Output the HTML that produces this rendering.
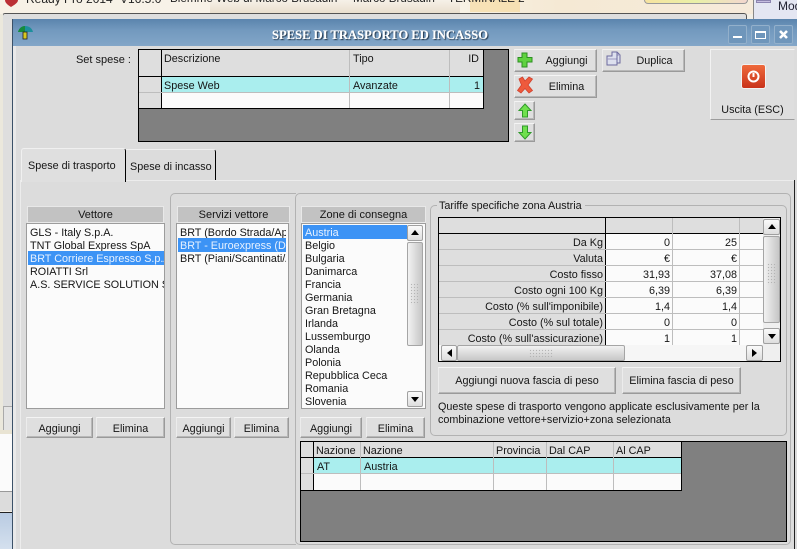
<!DOCTYPE html>
<html><head><meta charset="utf-8">
<style>
html,body{margin:0;padding:0}
body{width:797px;height:549px;overflow:hidden;position:relative;background:#f3efe6;font:10.8px/13px "Liberation Sans",sans-serif;color:#151515}
div,span,svg{position:absolute;box-sizing:border-box}
.t{white-space:nowrap;line-height:14px;height:14px;margin-top:1px}
.r{text-align:right}
.c{text-align:center}
.btn{background:#dfdfdf;border:1px solid;border-color:#f4f4f4 #9a9a9a #9a9a9a #ececec;box-shadow:inset -1px -1px 0 #b8b8b8;display:flex;align-items:center;justify-content:center;white-space:nowrap;padding-top:2px}
.lo{padding-top:3px}
.b{background:#000}
.g{background:#bdbdbd}
.hd{background:#c2c2c2;border:1px solid #e8e8e8;text-align:center;line-height:17px;font-size:11px}
.list{background:#fbfbfb;border:1px solid #9c9c9c;overflow:hidden}
.list div{left:2px;right:0;height:13px;line-height:13px;white-space:nowrap;padding-left:1px;overflow:hidden}
.list div.sel{background:#3c93f5;color:#e8f2ff;height:14px;line-height:17px}
.sb{background:linear-gradient(90deg,#f2f2f2,#dcdcdc 50%,#c6c6c6);border:1px solid #a5a5a5;border-radius:2px}
.ar{background:linear-gradient(#fafafa,#dedede);border:1px solid #a0a0a0;border-radius:2px}
.win{background:#6f96bb;border:1px solid #93b0cb;border-radius:2px}
.group{border:1px solid #b2b2b2;border-radius:5px}
.grip{background-image:radial-gradient(circle,#b4b4b4 .7px,transparent .8px);background-size:3px 3px}
</style></head><body>

<!-- background behind -->
<div style="left:0;top:0;width:797px;height:14px;background:linear-gradient(90deg,#f7f1e6,#f8f4ea 55%,#f5e9d4 70%,#f6ebdc)"></div>
<div style="left:210px;top:0;width:250px;height:13px;background:linear-gradient(#f6f1e8,#eadfce)"></div>
<div style="left:470px;top:0;width:50px;height:12px;background:#f6d89a;opacity:.6"></div>
<div style="left:644px;top:0;width:104px;height:4px;border:1px solid #999;border-top:0;border-radius:0 0 5px 5px;background:linear-gradient(90deg,#f7e3a0,#e9f0a8,#f3d7cf)"></div>
<svg style="left:3px;top:0" width="16" height="7"><path d="M2 0 H15 C15 3 11 5 8 7 C5 5 2 3 2 0Z" fill="#bb2f35"/></svg>
<div class="t" style="left:26px;top:-9px;font-size:12px;color:#222">Ready Pro 2014</div>
<div class="t" style="left:120px;top:-9px;font-size:12px;color:#222">V16.5.0</div>
<div class="t" style="left:170px;top:-9px;font-size:11.7px;color:#222">Biemme Web di Marco Brusadin</div>
<div class="t" style="left:353px;top:-9px;font-size:11.7px;color:#222">Marco Brusadin</div>
<div class="t" style="left:448px;top:-9px;font-size:11.7px;color:#222">TERMINALE 2</div>
<div style="left:2px;top:13px;width:745px;height:420px;background:#dedede;border:1px solid #555;border-bottom:0;border-radius:3px 3px 0 0"></div>
<div style="left:753px;top:0;width:44px;height:19px;background:#e4e6f2;border-left:1px solid #888"></div>
<div style="left:756px;top:0;width:15px;height:3px;background:#c6bde0;border:1px solid #8c84b0"></div>
<div class="t" style="left:778px;top:-1px;font-size:12px;line-height:12px;color:#223">Mod</div>
<div style="left:0;top:14px;width:3px;height:420px;background:#ebe8dc"></div>
<div style="left:3px;top:406px;width:10px;height:25px;background:#e4e4e4;border:1px solid #aaa"></div>
<div style="left:0;top:430px;width:13px;height:4px;background:#e9e4d3"></div>
<div style="left:0;top:434px;width:13px;height:58px;background:#fbfbfb"></div>
<div style="left:0;top:491px;width:13px;height:20px;background:#dcdcdc;border-top:1px solid #999;"></div>
<div style="left:0;top:512px;width:13px;height:1px;background:#222"></div>
<div style="left:0;top:513px;width:13px;height:36px;background:linear-gradient(#b9cbe2,#d4e0ee)"></div>

<!-- window -->
<div style="left:12px;top:19px;width:785px;height:530px;background:#dcdcdc;border-left:1px solid #3b5168"></div>
<div style="left:13px;top:19px;width:784px;height:27px;background:linear-gradient(#5b84ad,#7299be 40%,#83a6c8)"></div>
<div style="left:13px;top:46px;width:3px;height:503px;background:#e9e9e9"></div>
<svg style="left:17px;top:25px" width="17" height="15" viewBox="0 0 17 15"><path d="M1 7 C2 3 5 1 8 1 C12 1 15 3 16 7 Z" fill="#1d8f9c"/><path d="M1 7 C2 3 5 1 8 1 L8 7Z" fill="#168b3c"/><rect x="6" y="7" width="4" height="7" fill="#d8c820" stroke="#222" stroke-width=".8"/></svg>
<div class="t c" style="left:240px;top:27px;width:280px;font:bold 12.6px/14px 'Liberation Serif',serif;color:#fff;text-shadow:1px 1px 1px #1f3348,0 0 .6px #fff">SPESE DI TRASPORTO ED INCASSO</div>
<div class="win" style="left:728px;top:25px;width:19px;height:19px"></div>
<div style="left:733px;top:36px;width:9px;height:2px;background:#fff"></div>
<div class="win" style="left:751px;top:25px;width:19px;height:19px"></div>
<div style="left:755px;top:31px;width:11px;height:8px;border:1px solid #fff;border-top:2px solid #fff"></div>
<div class="win" style="left:774px;top:25px;width:19px;height:19px"></div>
<svg style="left:778px;top:29px" width="11" height="11"><path d="M2 2 L9 9 M9 2 L2 9" stroke="#fff" stroke-width="2.6"/></svg>

<!-- top grid -->
<div class="t r" style="left:60px;top:52px;width:71px;font-size:11px">Set spese :</div>
<div class="b" style="left:138px;top:49px;width:371px;height:93px"></div>
<div style="left:139px;top:50px;width:369px;height:91px;background:#808080"></div>
<div class="b" style="left:139px;top:50px;width:345px;height:59px"></div>
<div style="left:139px;top:50px;width:22px;height:26px;background:#dedede"></div>
<div style="left:162px;top:50px;width:187px;height:26px;background:#dedede"></div>
<div style="left:350px;top:50px;width:99px;height:26px;background:#dedede"></div>
<div style="left:450px;top:50px;width:33px;height:26px;background:#dedede"></div>
<div style="left:139px;top:77px;width:22px;height:15px;background:#dedede"></div>
<div style="left:139px;top:93px;width:22px;height:15px;background:#dedede"></div>
<div style="left:162px;top:77px;width:321px;height:15px;background:#aaeeee"></div>
<div style="left:162px;top:93px;width:321px;height:15px;background:#fbfbfb"></div>
<div class="g" style="left:139px;top:92px;width:344px;height:1px"></div>
<div class="g" style="left:349px;top:50px;width:1px;height:58px"></div>
<div class="g" style="left:449px;top:50px;width:1px;height:58px"></div>
<div class="t" style="left:164px;top:51px">Descrizione</div>
<div class="t" style="left:353px;top:51px">Tipo</div>
<div class="t r" style="left:450px;top:51px;width:29px">ID</div>
<div class="t" style="left:164px;top:78px">Spese Web</div>
<div class="t" style="left:353px;top:78px">Avanzate</div>
<div class="t r" style="left:450px;top:78px;width:30px">1</div>

<!-- buttons -->
<div class="btn" style="left:514px;top:49px;width:83px;height:23px;padding-left:22px">Aggiungi</div>
<div class="btn" style="left:514px;top:75px;width:83px;height:23px;padding-left:22px">Elimina</div>
<div class="btn" style="left:602px;top:49px;width:83px;height:23px;padding-left:22px">Duplica</div>
<div class="btn" style="left:514px;top:101px;width:21px;height:19px"></div>
<div class="btn" style="left:514px;top:123px;width:21px;height:19px"></div>
<svg style="left:517px;top:52px" width="16" height="16" viewBox="0 0 16 16"><path d="M5 1 H10 V5.500 H15 V10 H10 V15 H5 V10 H1 V5.500 H5 Z" fill="#5fd23f" stroke="#2c8f22"/></svg>
<svg style="left:517px;top:76px" width="16" height="18" viewBox="0 0 16 18"><path d="M2 3 L5.500 1 L8 5 L12 1 L15.500 3 L11 9 L15.500 14.500 L12 17 L8 12.500 L4 17 L.5 14.500 L4.500 9 Z" fill="#ee5a3c" stroke="#d0412e" stroke-width=".8"/></svg>
<svg style="left:606px;top:51px" width="16" height="16" viewBox="0 0 16 16"><path d="M6 1 H11 L14 4 V12 H11 V14 H1 V5 H6Z" fill="#dde0ee" stroke="#6c6a9e"/><path d="M1 8 H11 M11 4 H14" stroke="#9a98c0"/><path d="M6 1 V5 M11 1 V12" stroke="#6c6a9e"/></svg>
<svg style="left:518px;top:103px" width="14" height="15" viewBox="0 0 14 15"><path d="M7 1 L13 7.500 H9.500 V14 H4.500 V7.500 H1Z" fill="#6fe04d" stroke="#2f9a2a"/></svg>
<svg style="left:518px;top:125px" width="14" height="15" viewBox="0 0 14 15"><path d="M7 14 L13 7.500 H9.500 V1 H4.500 V7.500 H1Z" fill="#6fe04d" stroke="#2f9a2a"/></svg>

<div style="left:710px;top:49px;width:85px;height:71px;background:#dedede;border:1px solid;border-color:#f2f2f2 #dcdcdc #9c9c9c #f2f2f2"></div>
<div style="left:742px;top:65px;width:23px;height:23px;background:linear-gradient(#ef6a3c,#c9321a);border-radius:2px;box-shadow:0 0 0 1px #f2f2f2"></div>
<svg style="left:746px;top:69px" width="15" height="15" viewBox="0 0 15 15"><circle cx="7.500" cy="7.500" r="5" fill="none" stroke="#fff" stroke-width="2"/><path d="M7.500 4 V8" stroke="#fff" stroke-width="2"/></svg>
<div class="t c" style="left:710px;top:102px;width:85px;font-size:10.8px">Uscita (ESC)</div>

<!-- tabs -->
<div style="left:20px;top:180px;width:775px;height:369px;background:#dcdcdc;border-top:1px solid #ececec;border-left:1px solid #ececec"></div>
<div style="left:794px;top:180px;width:1px;height:369px;background:#222"></div>
<div style="left:21px;top:148px;width:105px;height:34px;background:#dfdfdf;border-top:1px solid #f0f0f0;border-left:1px solid #f0f0f0;border-right:1px solid #000;border-radius:3px 3px 0 0"></div>
<div style="left:126px;top:149px;width:90px;height:31px;background:#dcdcdc;border-top:1px solid #f0f0f0;border-right:1px solid #000;border-radius:0 3px 0 0"></div>
<div class="t" style="left:28px;top:158px">Spese di trasporto</div>
<div class="t" style="left:130px;top:159px">Spese di incasso</div>

<!-- groups -->
<div class="group" style="left:170px;top:193px;width:126px;height:352px;border-right:0;border-radius:5px 0 0 5px"></div>
<div class="group" style="left:295px;top:193px;width:496px;height:352px"></div>

<!-- Vettore -->
<div class="hd" style="left:27px;top:206px;width:137px;height:17px">Vettore</div>
<div class="list" style="left:26px;top:223px;width:139px;height:186px">
<div style="top:3px">GLS - Italy S.p.A.</div>
<div style="top:16px">TNT Global Express SpA</div>
<div class="sel" style="top:27px;left:1px;padding-left:2px">BRT Corriere Espresso S.p.A</div>
<div style="top:42px">ROIATTI Srl</div>
<div style="top:55px">A.S. SERVICE SOLUTION S.c</div>
</div>
<div class="btn lo" style="left:26px;top:417px;width:67px;height:21px">Aggiungi</div>
<div class="btn lo" style="left:96px;top:417px;width:69px;height:21px">Elimina</div>

<!-- Servizi -->
<div class="hd" style="left:177px;top:206px;width:113px;height:17px">Servizi vettore</div>
<div class="list" style="left:176px;top:223px;width:113px;height:186px">
<div style="top:3px;right:2px">BRT (Bordo Strada/App</div>
<div class="sel" style="top:14px;left:1px;right:2px;padding-left:2px">BRT - Euroexpress (Do</div>
<div style="top:29px;right:2px">BRT (Piani/Scantinati/A</div>
</div>
<div class="btn lo" style="left:176px;top:417px;width:55px;height:21px">Aggiungi</div>
<div class="btn lo" style="left:234px;top:417px;width:55px;height:21px">Elimina</div>

<!-- Zone -->
<div class="hd" style="left:301px;top:206px;width:125px;height:17px">Zone di consegna</div>
<div class="list" style="left:301px;top:223px;width:125px;height:186px">
<div class="sel" style="top:1px;left:1px;width:104px;right:auto;padding-left:2px">Austria</div>
<div style="top:16px">Belgio</div>
<div style="top:29px">Bulgaria</div>
<div style="top:42px">Danimarca</div>
<div style="top:55px">Francia</div>
<div style="top:68px">Germania</div>
<div style="top:81px">Gran Bretagna</div>
<div style="top:94px">Irlanda</div>
<div style="top:107px">Lussemburgo</div>
<div style="top:120px">Olanda</div>
<div style="top:133px">Polonia</div>
<div style="top:146px">Repubblica Ceca</div>
<div style="top:159px">Romania</div>
<div style="top:172px">Slovenia</div>
</div>
<div class="ar" style="left:407px;top:225px;width:16px;height:16px"></div>
<svg style="left:411px;top:230px" width="8" height="5"><path d="M0 5 L4 0 L8 5Z" fill="#000"/></svg>
<div class="sb" style="left:407px;top:242px;width:16px;height:104px"></div>
<div class="grip" style="left:410px;top:283px;width:9px;height:22px"></div>
<div class="ar" style="left:407px;top:391px;width:16px;height:16px"></div>
<svg style="left:411px;top:397px" width="8" height="5"><path d="M0 0 L4 5 L8 0Z" fill="#000"/></svg>
<div class="btn lo" style="left:300px;top:417px;width:62px;height:21px">Aggiungi</div>
<div class="btn lo" style="left:366px;top:417px;width:59px;height:21px">Elimina</div>

<!-- Tariffe group -->
<div class="group" style="left:430px;top:205px;width:357px;height:231px"></div>
<div class="t" style="left:437px;top:198px;padding:0 3px 0 2px;background:#dcdcdc">Tariffe specifiche zona Austria</div>

<div class="b" style="left:438px;top:217px;width:343px;height:145px"></div>
<div style="left:439px;top:218px;width:341px;height:143px;background:#e4e4e4"></div>
<div style="left:439px;top:218px;width:324px;height:15px;background:#dedede"></div>
<div class="b" style="left:439px;top:233px;width:324px;height:1px"></div>
<div class="b" style="left:605px;top:218px;width:1px;height:127px"></div>
<div style="left:606px;top:234px;width:157px;height:111px;background:#fbfbfb"></div>
<div style="left:439px;top:234px;width:166px;height:111px;background:#dedede"></div>
<div class="g" style="left:672px;top:218px;width:1px;height:127px"></div>
<div class="g" style="left:739px;top:218px;width:1px;height:127px"></div>
<div class="g" style="left:439px;top:249px;width:324px;height:1px"></div>
<div class="g" style="left:439px;top:265px;width:324px;height:1px"></div>
<div class="g" style="left:439px;top:281px;width:324px;height:1px"></div>
<div class="g" style="left:439px;top:297px;width:324px;height:1px"></div>
<div class="g" style="left:439px;top:313px;width:324px;height:1px"></div>
<div class="g" style="left:439px;top:329px;width:324px;height:1px"></div>

<div class="t r" style="left:439px;top:235px;width:164px">Da Kg</div>
<div class="t r" style="left:439px;top:251px;width:164px">Valuta</div>
<div class="t r" style="left:439px;top:267px;width:164px">Costo fisso</div>
<div class="t r" style="left:439px;top:283px;width:164px">Costo ogni 100 Kg</div>
<div class="t r" style="left:439px;top:299px;width:164px">Costo (% sull'imponibile)</div>
<div class="t r" style="left:439px;top:315px;width:164px">Costo (% sul totale)</div>
<div class="t r" style="left:439px;top:331px;width:164px">Costo (% sull'assicurazione)</div>

<div class="t r" style="left:606px;top:235px;width:64px">0</div>
<div class="t r" style="left:606px;top:251px;width:64px">€</div>
<div class="t r" style="left:606px;top:267px;width:64px">31,93</div>
<div class="t r" style="left:606px;top:283px;width:64px">6,39</div>
<div class="t r" style="left:606px;top:299px;width:64px">1,4</div>
<div class="t r" style="left:606px;top:315px;width:64px">0</div>
<div class="t r" style="left:606px;top:331px;width:64px">1</div>
<div class="t r" style="left:673px;top:235px;width:64px">25</div>
<div class="t r" style="left:673px;top:251px;width:64px">€</div>
<div class="t r" style="left:673px;top:267px;width:64px">37,08</div>
<div class="t r" style="left:673px;top:283px;width:64px">6,39</div>
<div class="t r" style="left:673px;top:299px;width:64px">1,4</div>
<div class="t r" style="left:673px;top:315px;width:64px">0</div>
<div class="t r" style="left:673px;top:331px;width:64px">1</div>

<div style="left:763px;top:218px;width:17px;height:143px;background:#efefef"></div>
<div class="ar" style="left:763px;top:219px;width:17px;height:16px"></div>
<svg style="left:768px;top:224px" width="8" height="5"><path d="M0 5 L4 0 L8 5Z" fill="#000"/></svg>
<div class="sb" style="left:763px;top:236px;width:17px;height:87px"></div>
<div class="grip" style="left:767px;top:263px;width:9px;height:22px"></div>
<div class="ar" style="left:763px;top:328px;width:17px;height:16px"></div>
<svg style="left:768px;top:334px" width="8" height="5"><path d="M0 0 L4 5 L8 0Z" fill="#000"/></svg>

<div style="left:439px;top:345px;width:324px;height:16px;background:#f6f6f6"></div>
<div class="ar" style="left:441px;top:345px;width:16px;height:16px"></div>
<svg style="left:447px;top:349px" width="5" height="8"><path d="M5 0 L0 4 L5 8Z" fill="#000"/></svg>
<div style="left:457px;top:345px;width:168px;height:16px;background:linear-gradient(#f2f2f2,#dcdcdc 50%,#c8c8c8);border:1px solid #a5a5a5;border-radius:2px"></div>
<div class="grip" style="left:529px;top:349px;width:24px;height:9px"></div>
<div class="ar" style="left:746px;top:345px;width:17px;height:16px"></div>
<svg style="left:752px;top:349px" width="5" height="8"><path d="M0 0 L5 4 L0 8Z" fill="#000"/></svg>

<div class="btn" style="left:438px;top:367px;width:178px;height:27px">Aggiungi nuova fascia di peso</div>
<div class="btn" style="left:622px;top:367px;width:119px;height:27px">Elimina fascia di peso</div>
<div class="t" style="left:438px;top:399px">Queste spese di trasporto vengono applicate esclusivamente per la</div>
<div class="t" style="left:438px;top:412px">combinazione vettore+servizio+zona selezionata</div>

<!-- bottom grid -->
<div class="b" style="left:300px;top:441px;width:487px;height:101px"></div>
<div style="left:301px;top:442px;width:485px;height:99px;background:#808080"></div>
<div class="b" style="left:301px;top:442px;width:381px;height:49px"></div>
<div style="left:301px;top:442px;width:12px;height:15px;background:#dedede"></div>
<div style="left:301px;top:458px;width:12px;height:15px;background:#dedede"></div>
<div style="left:301px;top:474px;width:12px;height:16px;background:#dedede"></div>
<div style="left:314px;top:442px;width:367px;height:15px;background:#dedede"></div>
<div style="left:314px;top:458px;width:367px;height:15px;background:#aaeeee"></div>
<div style="left:314px;top:474px;width:367px;height:16px;background:#fbfbfb"></div>
<div class="g" style="left:301px;top:473px;width:380px;height:1px"></div>
<div class="g" style="left:360px;top:442px;width:1px;height:48px"></div>
<div class="g" style="left:493px;top:442px;width:1px;height:48px"></div>
<div class="g" style="left:546px;top:442px;width:1px;height:48px"></div>
<div class="g" style="left:613px;top:442px;width:1px;height:48px"></div>
<div class="t" style="left:316px;top:443px">Nazione</div>
<div class="t" style="left:363px;top:443px">Nazione</div>
<div class="t" style="left:496px;top:443px">Provincia</div>
<div class="t" style="left:549px;top:443px">Dal CAP</div>
<div class="t" style="left:616px;top:443px">Al CAP</div>
<div class="t" style="left:317px;top:459px">AT</div>
<div class="t" style="left:364px;top:459px">Austria</div>

</body></html>
